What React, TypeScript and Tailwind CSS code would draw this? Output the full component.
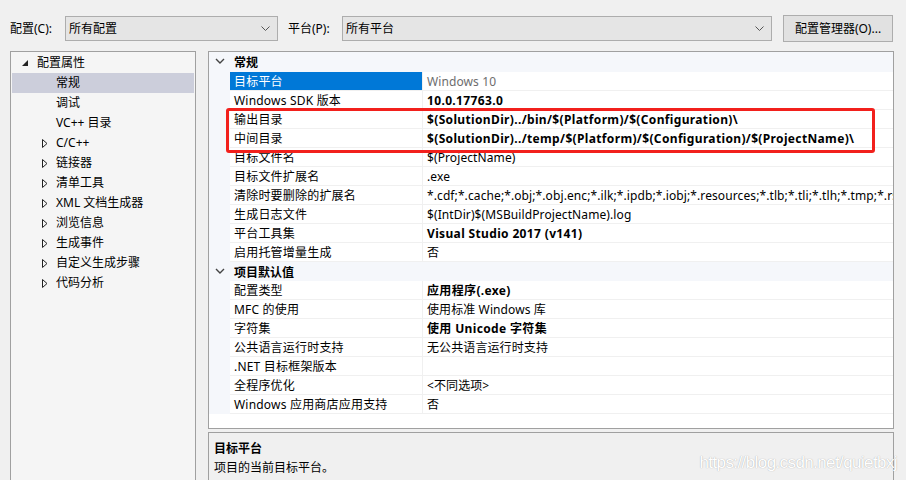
import React from 'react';

const font = '"Noto Sans", "Noto Sans CJK SC", sans-serif';

type Row = { label: string; value: string; bold?: boolean; muted?: boolean; selected?: boolean };

const general: Row[] = [
  { label: '目标平台', value: 'Windows 10', muted: true, selected: true },
  { label: 'Windows SDK 版本', value: '10.0.17763.0', bold: true },
  { label: '输出目录', value: '$(SolutionDir)../bin/$(Platform)/$(Configuration)\\', bold: true },
  { label: '中间目录', value: '$(SolutionDir)../temp/$(Platform)/$(Configuration)/$(ProjectName)\\', bold: true },
  { label: '目标文件名', value: '$(ProjectName)' },
  { label: '目标文件扩展名', value: '.exe' },
  {
    label: '清除时要删除的扩展名',
    value: '*.cdf;*.cache;*.obj;*.obj.enc;*.ilk;*.ipdb;*.iobj;*.resources;*.tlb;*.tli;*.tlh;*.tmp;*.rsp;*.pgc;*.pgd;*.meta;*.tlog',
  },
  { label: '生成日志文件', value: '$(IntDir)$(MSBuildProjectName).log' },
  { label: '平台工具集', value: 'Visual Studio 2017 (v141)', bold: true },
  { label: '启用托管增量生成', value: '否' },
];

const defaults: Row[] = [
  { label: '配置类型', value: '应用程序(.exe)', bold: true },
  { label: 'MFC 的使用', value: '使用标准 Windows 库' },
  { label: '字符集', value: '使用 Unicode 字符集', bold: true },
  { label: '公共语言运行时支持', value: '无公共语言运行时支持' },
  { label: '.NET 目标框架版本', value: '' },
  { label: '全程序优化', value: '<不同选项>' },
  { label: 'Windows 应用商店应用支持', value: '否' },
];

const treeItems: { label: string; expandable?: boolean; selected?: boolean }[] = [
  { label: '常规', selected: true },
  { label: '调试' },
  { label: 'VC++ 目录' },
  { label: 'C/C++', expandable: true },
  { label: '链接器', expandable: true },
  { label: '清单工具', expandable: true },
  { label: 'XML 文档生成器', expandable: true },
  { label: '浏览信息', expandable: true },
  { label: '生成事件', expandable: true },
  { label: '自定义生成步骤', expandable: true },
  { label: '代码分析', expandable: true },
];

function Chevron({ className = '' }: { className?: string }) {
  return (
    <svg width="9" height="6" viewBox="0 0 9 6" className={className}>
      <path d="M0.5 0.5 L4.5 4.5 L8.5 0.5" fill="none" stroke="#555" strokeWidth="1" />
    </svg>
  );
}

function Dropdown({ text, width }: { text: string; width: string }) {
  return (
    <div className={`${width} h-[25px] flex items-center justify-between border border-[#adadad] bg-[#e5e5e5] pl-[3px] pr-[7px]`}>
      <span>{text}</span>
      <Chevron />
    </div>
  );
}

function Category({ title }: { title: string }) {
  return (
    <div className="h-[19px] flex items-center bg-[#f5f7fb]">
      <div className="w-[21px] flex justify-center">
        <svg width="10" height="7" viewBox="0 0 10 7">
          <path d="M1 1 L5 5 L9 1" fill="none" stroke="#444" strokeWidth="1.4" />
        </svg>
      </div>
      <span className="pl-[4px] pt-[2px] font-bold">{title}</span>
    </div>
  );
}

function PropRow({ row }: { row: Row }) {
  return (
    <div className="h-[19px] flex bg-[#f5f7fb]">
      <div className="w-[21px] shrink-0" />
      <div
        className={`w-[193px] shrink-0 flex items-center pl-[4px] pt-[2px] tracking-[0.2px] border-b border-r border-[#f0f0f0] ${
          row.selected ? 'bg-[#0078d7] text-white' : 'bg-white'
        }`}
      >
        {row.label}
      </div>
      <div
        className={`flex-1 min-w-0 flex items-center pl-[4px] pt-[2px] bg-white border-b border-[#f0f0f0] whitespace-nowrap overflow-hidden ${
          row.bold ? 'font-bold tracking-[0.35px]' : 'tracking-[0.1px]'
        } ${row.muted ? 'text-[#6d6d6d]' : ''}`}
      >
        {row.value}
      </div>
    </div>
  );
}

export default function App() {
  return (
    <div
      className="w-[906px] h-[480px] overflow-hidden bg-[#f0f0f0] text-[12px] leading-none text-black"
      style={{ fontFamily: font }}
    >
      {/* Top bar */}
      <div className="flex items-center h-[51px] pl-[10px] pt-[6px]">
        <span className="w-[55px] pt-[1px]">配置(C):</span>
        <Dropdown text="所有配置" width="w-[213px]" />
        <span className="ml-[10px] w-[54px] pt-[1px]">平台(P):</span>
        <Dropdown text="所有平台" width="w-[430px]" />
        <div className="ml-[11px] w-[110px] h-[27px] flex items-center justify-center border border-[#adadad] bg-[#e1e1e1]">
          配置管理器(O)...
        </div>
      </div>

      <div className="flex pl-[10px] gap-[12px]">
        {/* Tree */}
        <div className="w-[186px] h-[440px] border border-[#a0a0a0] bg-[#f5f5f5] pt-[1px] px-[1px]">
          <div className="h-[20px] flex items-center">
            <svg width="8" height="8" viewBox="0 0 8 8" className="ml-[9px] mr-[8px]">
              <path d="M7 1 L7 7 L1 7 Z" fill="#222" />
            </svg>
            <span>配置属性</span>
          </div>
          {treeItems.map((item) => (
            <div
              key={item.label}
              className={`h-[20px] flex items-center ${item.selected ? 'bg-[#cccedb]' : ''}`}
            >
              <div className="w-[42px] flex justify-end pr-[6px]">
                {item.expandable && (
                  <svg width="6" height="9" viewBox="0 0 6 9">
                    <path d="M0.5 0.5 L5 4.5 L0.5 8.5 Z" fill="none" stroke="#222" strokeWidth="1" />
                  </svg>
                )}
              </div>
              <span className="pl-[2px]">{item.label}</span>
            </div>
          ))}
        </div>

        {/* Right side */}
        <div className="w-[686px] flex flex-col gap-[3px]">
          <div className="relative h-[378px] border border-[#a0a0a0] bg-white">
            <Category title="常规" />
            <div className="h-[1px] bg-[#f5f7fb]" />
            {general.map((r) => (
              <PropRow key={r.label} row={r} />
            ))}
            <Category title="项目默认值" />
            {defaults.map((r) => (
              <PropRow key={r.label} row={r} />
            ))}
            {/* annotation box */}
            <div className="absolute left-[17px] top-[56px] w-[649px] h-[45px] border-[3px] border-[#f2201c] rounded-[3px]" />
          </div>

          <div className="relative h-[60px] border border-[#a0a0a0] bg-[#f0f0f0] px-[5px] pt-[6px]">
            <div className="font-bold h-[19px] flex items-center">目标平台</div>
            <div className="h-[19px] flex items-center">项目的当前目标平台。</div>
            <div
              className="absolute right-[-4px] top-[21px] text-[17px] tracking-[-0.6px] text-white [text-shadow:0_0_1px_#9a9a9a]"
              style={{ fontFamily: '"Liberation Sans Narrow", "Liberation Sans", sans-serif' }}
            >
              https://blog.csdn.net/quietbxj
            </div>
          </div>
        </div>
      </div>
    </div>
  );
}
